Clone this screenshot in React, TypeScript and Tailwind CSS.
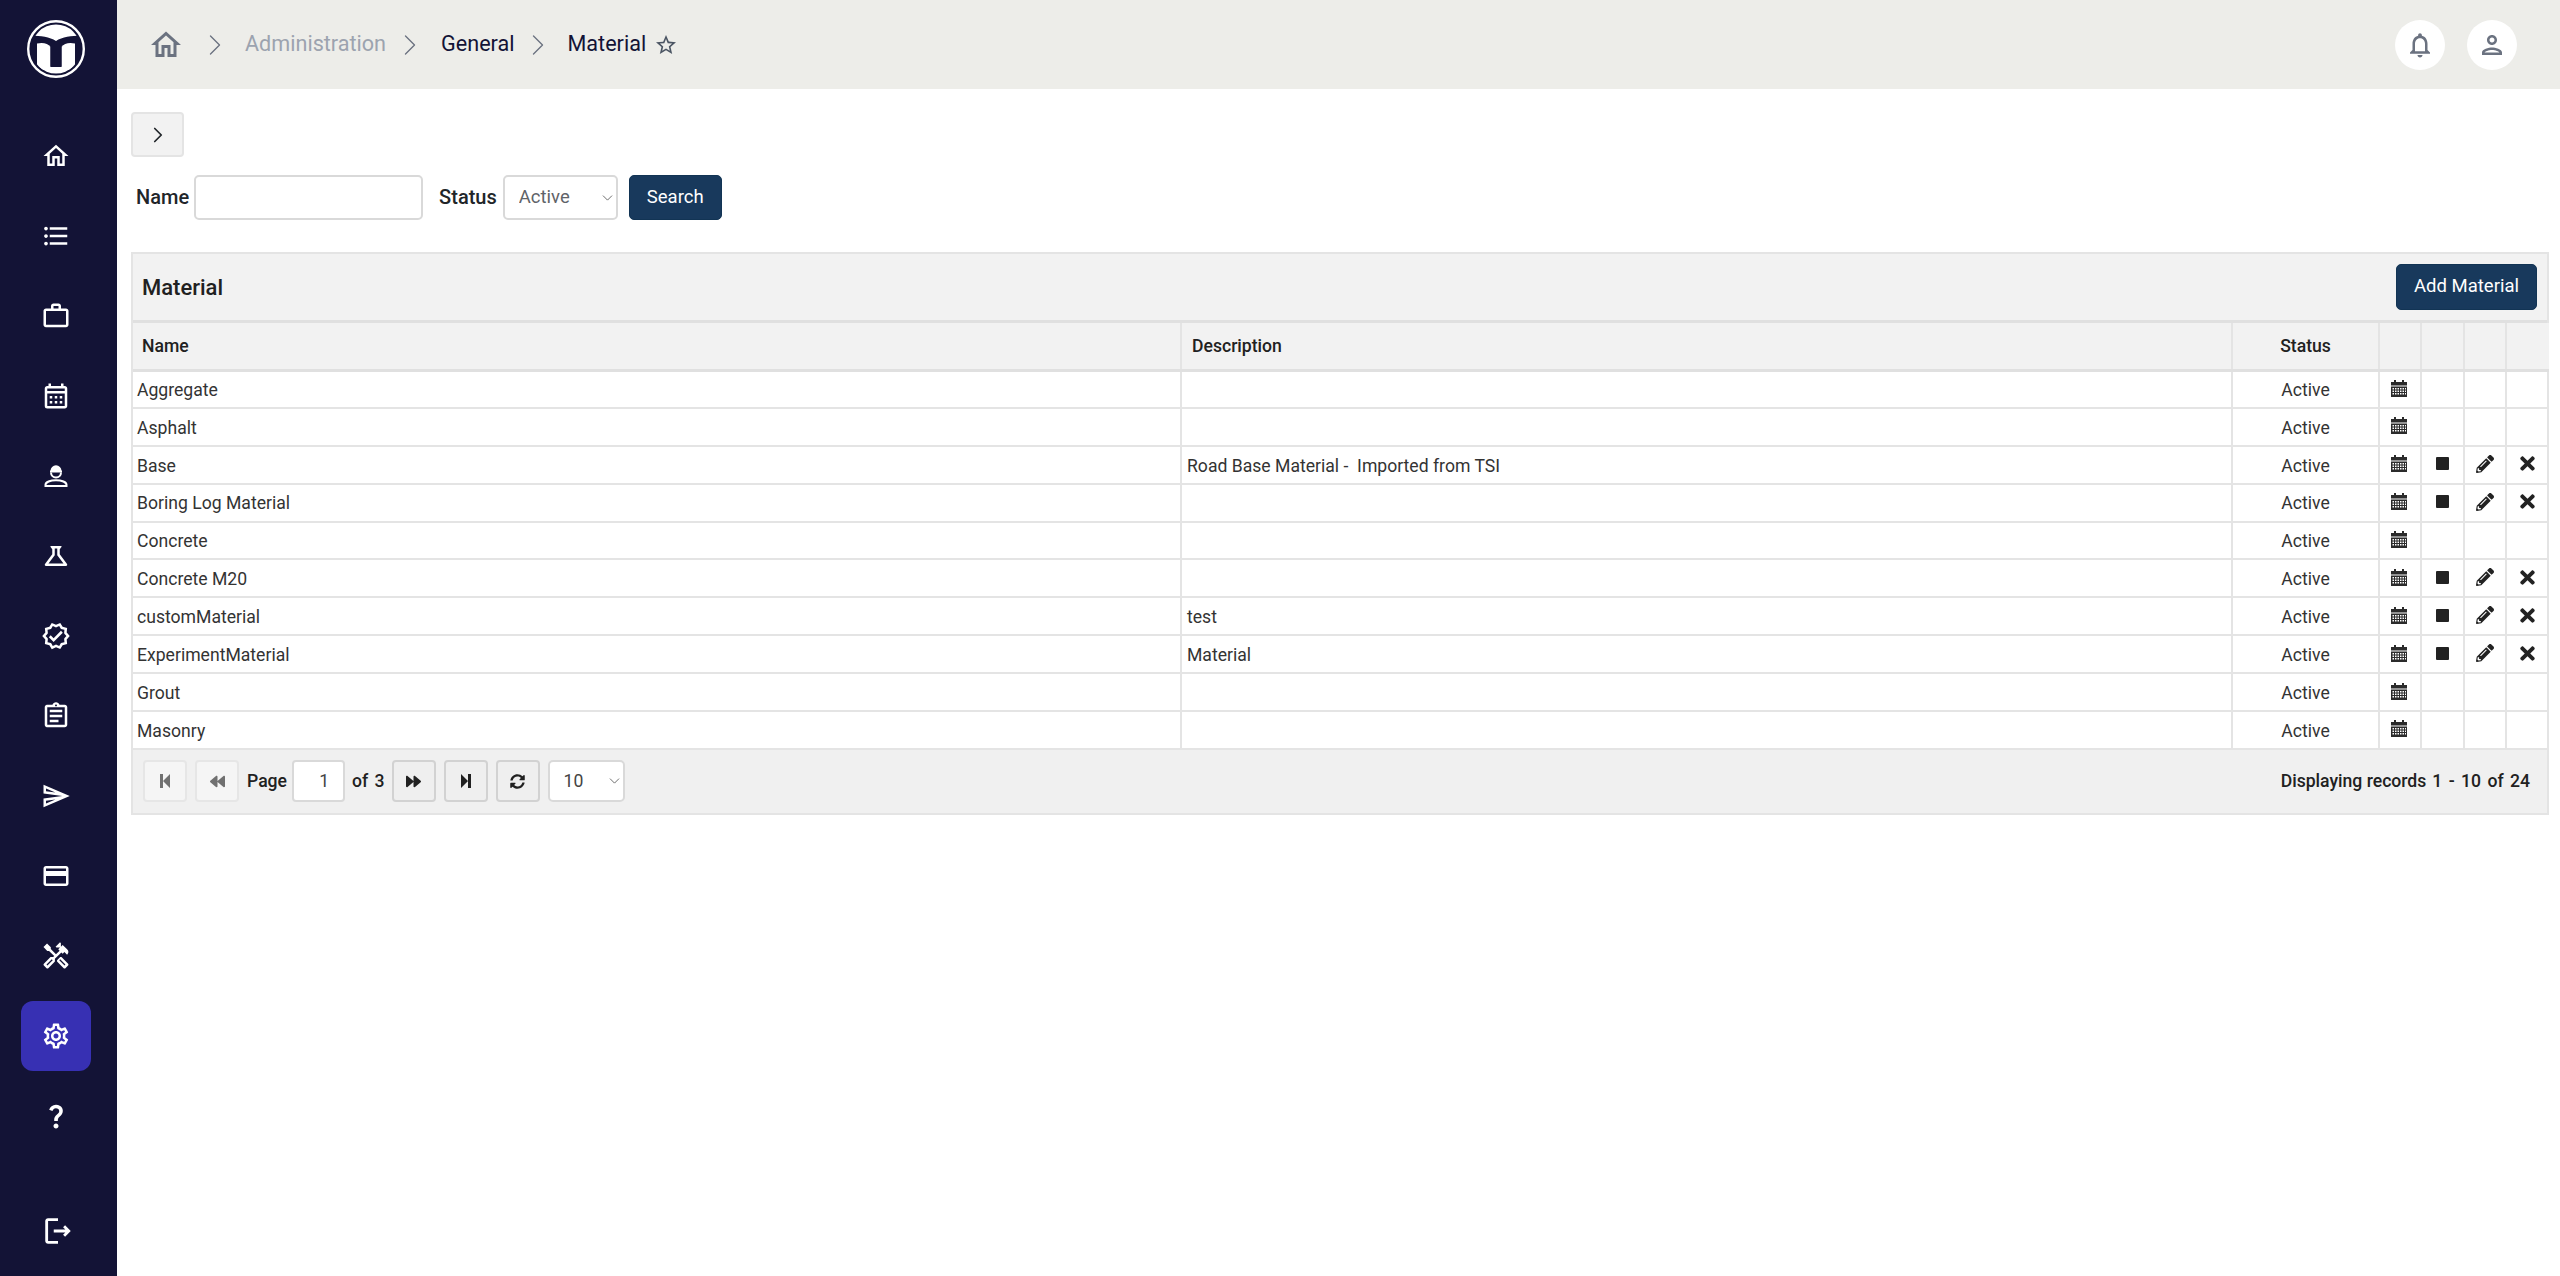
import {
  MdOutlineHome,
  MdFormatListBulleted,
  MdOutlineWorkOutline,
  MdOutlineCalendarMonth,
  MdOutlineScience,
  MdOutlineVerified,
  MdOutlineAssignment,
  MdOutlineSend,
  MdOutlineCreditCard,
  MdOutlineHandyman,
  MdOutlineSettings,
  MdQuestionMark,
  MdOutlineLogout,
  MdOutlineNotifications,
  MdOutlinePerson,
  MdStarBorder,
} from 'react-icons/md'
import { FaBackward, FaForward, FaSyncAlt, FaPencilAlt, FaTimes } from 'react-icons/fa'
import { ChevronDown, ChevronRight } from 'lucide-react'

function WorkerIcon({ size }: { size: number }) {
  return (
    <svg width={size} height={size} viewBox="0 0 30 30" fill="none" stroke="white" strokeWidth="2">
      <path d="M4.5 25h21v-1.2c0-2.6-4.7-4.6-10.500-4.600s-10.500 2-10.500 4.600z" />
      <path d="M10 11.500a5 5 0 0 0 10 0" />
      <path d="M9 10.500h12M10.500 10c0-2.700 2-4.700 4.500-4.700s4.500 2 4.500 4.700" fill="white" />
    </svg>
  )
}

const navItems: { icon: React.ComponentType<{ size: number }>; active?: boolean }[] = [
  { icon: MdOutlineHome },
  { icon: MdFormatListBulleted },
  { icon: MdOutlineWorkOutline },
  { icon: MdOutlineCalendarMonth },
  { icon: WorkerIcon },
  { icon: MdOutlineScience },
  { icon: MdOutlineVerified },
  { icon: MdOutlineAssignment },
  { icon: MdOutlineSend },
  { icon: MdOutlineCreditCard },
  { icon: MdOutlineHandyman },
  { icon: MdOutlineSettings, active: true },
  { icon: MdQuestionMark },
]

const rows = [
  { name: 'Aggregate', desc: '', editable: false },
  { name: 'Asphalt', desc: '', editable: false },
  { name: 'Base', desc: 'Road Base Material -  Imported from TSI', editable: true },
  { name: 'Boring Log Material', desc: '', editable: true },
  { name: 'Concrete', desc: '', editable: false },
  { name: 'Concrete M20', desc: '', editable: true },
  { name: 'customMaterial', desc: 'test', editable: true },
  { name: 'ExperimentMaterial', desc: 'Material', editable: true },
  { name: 'Grout', desc: '', editable: false },
  { name: 'Masonry', desc: '', editable: false },
]

function Logo() {
  return (
    <svg width="58" height="58" viewBox="0 0 58 58">
      <defs>
        <clipPath id="logo-disc">
          <circle cx="29" cy="29" r="24.500" />
        </clipPath>
      </defs>
      <circle cx="29" cy="29" r="27.800" fill="none" stroke="white" strokeWidth="2.400" />
      <g clipPath="url(#logo-disc)" fill="white">
        <path d="M0 0H58V15.500C47 15.500 36 16.500 29 21C22 16.500 11 15.500 0 15.500Z" />
        <path d="M10 23.500C16 22 21 23.500 23.500 27V50H10Z" />
        <path d="M48 23.500C42 22 37 23.500 34.500 27V50H48Z" />
        <path d="M10 47H48V58H10Z" />
      </g>
      <path d="M23.500 46H34.500V50.500H23.500Z" fill="white" />
      <path d="M23.500 27H34.500V47H23.500Z" fill="#131336" />
    </svg>
  )
}

function CalendarGlyph() {
  return (
    <svg width="16" height="17" viewBox="0 0 16 17" fill="#2b2b2b">
      <rect x="3" y="0" width="2" height="3" />
      <rect x="11" y="0" width="2" height="3" />
      <rect x="0" y="2" width="16" height="3.500" />
      <path
        fillRule="evenodd"
        d="M0 6.500h16V17H0z M1.500 8v1.500H3V8z M4 8v1.500h1.500V8z M6.500 8v1.500H8V8z M9 8v1.500h1.500V8z M11.500 8v1.500H13V8z M14 8v1.500h1V8z M1.500 10.500V12H3v-1.500z M4 10.500V12h1.500v-1.500z M6.500 10.500V12H8v-1.500z M9 10.500V12h1.500v-1.500z M11.500 10.500V12H13v-1.500z M14 10.500V12h1v-1.500z M1.500 13v1.500H3V13z M4 13v1.500h1.500V13z M6.500 13v1.500H8V13z M9 13v1.500h1.500V13z M11.500 13v1.500H13V13z M14 13v1.500h1V13z"
      />
    </svg>
  )
}

function StepIcon({ dir }: { dir: 'first' | 'last' }) {
  return (
    <svg width="10" height="14" viewBox="0 0 10 14" fill="currentColor">
      {dir === 'first' ? <path d="M0 0h3v14H0zM3 7l7-7v14z" /> : <path d="M10 0H7v14h3zM7 7L0 0v14z" />}
    </svg>
  )
}

function PagerButton({ children, disabled }: { children: React.ReactNode; disabled?: boolean }) {
  return (
    <button
      className={`flex h-[42px] w-[44px] items-center justify-center rounded-[4px] border-2 ${
        disabled ? 'border-[#e6e6e6] bg-[#f5f5f5] text-[#707070]' : 'border-[#d2d2d2] bg-[#efefef] text-[#212121]'
      }`}
    >
      {children}
    </button>
  )
}

function Select({ value, options, className, textClass }: { value: string; options: string[]; className: string; textClass: string }) {
  return (
    <div className={`relative ${className}`}>
      <select
        defaultValue={value}
        className={`h-full w-full appearance-none rounded-[5px] border-2 border-[#d9d9d9] bg-white pl-[14px] ${textClass}`}
      >
        {options.map((o) => (
          <option key={o}>{o}</option>
        ))}
      </select>
      <ChevronDown size={17} strokeWidth={1.2} className="pointer-events-none absolute top-1/2 right-[2px] -translate-y-1/2 text-[#555]" />
    </div>
  )
}

export default function App() {
  return (
    <div className="flex h-[1276px] w-full bg-white font-['Roboto',sans-serif] text-[#212529]">
      <aside className="flex w-[117px] shrink-0 flex-col items-center bg-[#131336] pt-[20px] pr-[5px] pb-[10px]">
        <Logo />
        <nav className="mt-[43px] flex flex-col items-center gap-[10px]">
          {navItems.map((item, i) => {
            const Icon = item.icon
            return (
              <div
                key={i}
                className={`flex h-[70px] w-[70px] items-center justify-center rounded-[12px] text-white ${
                  item.active ? 'bg-[#3730b3]' : ''
                }`}
              >
                <Icon size={30} />
              </div>
            )
          })}
        </nav>
        <div className="mt-auto ml-[4px] flex h-[70px] w-[70px] items-center justify-center text-white">
          <MdOutlineLogout size={34} />
        </div>
      </aside>

      <main className="flex min-w-0 flex-1 flex-col">
        <header className="flex h-[89px] items-center bg-[#edede9] pr-[43px] pl-[31px]">
          <MdOutlineHome size={36} className="text-[#6b7280]" />
          <ChevronRight size={36} strokeWidth={0.9} className="ml-[13px] text-[#6b7280]" />
          <span className="ml-[12px] text-[21.600px] text-[#9ca3af]">Administration</span>
          <ChevronRight size={36} strokeWidth={0.9} className="ml-[6px] text-[#6b7280]" />
          <span className="ml-[13px] text-[21.600px] text-[#131336]">General</span>
          <ChevronRight size={36} strokeWidth={0.9} className="ml-[6px] text-[#6b7280]" />
          <span className="ml-[11px] text-[21.600px] text-[#131336]">Material</span>
          <MdStarBorder size={24} className="ml-[8px] text-[#4b5563]" />
          <div className="ml-auto flex items-center gap-[22px]">
            <div className="flex h-[50px] w-[50px] items-center justify-center rounded-full bg-white text-[#6b7280]">
              <MdOutlineNotifications size={30} />
            </div>
            <div className="flex h-[50px] w-[50px] items-center justify-center rounded-full bg-white text-[#6b7280]">
              <MdOutlinePerson size={30} />
            </div>
          </div>
        </header>

        <div className="flex flex-col pt-[23px] pr-[11px] pl-[14px]">
          <button className="flex h-[45px] w-[53px] items-center justify-center rounded-[4px] border-2 border-[#e4e4e4] bg-[#f2f2f2]">
            <ChevronRight size={26} strokeWidth={1.6} className="text-[#212529]" />
          </button>

          <div className="mt-[18px] flex h-[45px] items-center pl-[5px]">
            <label className="mb-[2px] text-[20px] font-medium text-[#212529]">Name</label>
            <input className="ml-[5px] h-[45px] w-[229px] rounded-[5px] border-2 border-[#d9d9d9] bg-white" />
            <label className="mb-[2px] ml-[16px] text-[20px] font-medium text-[#212529]">Status</label>
            <Select
              value="Active"
              options={['Active', 'Inactive']}
              className="ml-[6px] h-[45px] w-[115px]"
              textClass="text-[18.500px] text-[#5f6368]"
            />
            <button className="ml-[11px] h-[45px] w-[93px] rounded-[5px] border border-[#123454] bg-[#18395c] text-[18.500px] text-white">
              Search
            </button>
          </div>

          <section className="mt-[32px] border-2 border-[#e4e4e4]">
            <div className="flex h-[69px] items-center justify-between border-b-[3px] border-[#e0e0e0] bg-[#f2f2f2] pr-[10px] pl-[9px]">
              <h2 className="text-[22px] font-medium text-[#212121]">Material</h2>
              <button className="h-[46px] w-[141px] rounded-[5px] border border-[#123454] bg-[#18395c] text-[18.500px] text-white">
                Add Material
              </button>
            </div>

            <table className="w-full table-fixed border-collapse text-[17.600px] text-[#333]">
              <colgroup>
                <col className="w-[1048px]" />
                <col className="w-[1051px]" />
                <col className="w-[147px]" />
                <col className="w-[42px]" />
                <col className="w-[43px]" />
                <col className="w-[42px]" />
                <col className="w-[43px]" />
              </colgroup>
              <thead>
                <tr className="h-[47px] border-b-[3px] border-[#e0e0e0] bg-[#f2f2f2] text-[#212121]">
                  <th className="border-r-2 border-[#e4e4e4] pl-[9px] text-left font-medium">Name</th>
                  <th className="border-r-2 border-[#e4e4e4] pl-[10px] text-left font-medium">Description</th>
                  <th className="border-r-2 border-[#e4e4e4] text-center font-medium">Status</th>
                  <th className="border-r-2 border-[#e4e4e4]" />
                  <th className="border-r-2 border-[#e4e4e4]" />
                  <th className="border-r-2 border-[#e4e4e4]" />
                  <th />
                </tr>
              </thead>
              <tbody>
                {rows.map((row) => (
                  <tr key={row.name} className="h-[37.900px] border-b-2 border-[#e4e4e4]">
                    <td className="border-r-2 border-[#e4e4e4] pt-[2px] pl-[4px]">{row.name}</td>
                    <td className="border-r-2 border-[#e4e4e4] pt-[2px] pl-[5px] whitespace-pre">{row.desc}</td>
                    <td className="border-r-2 border-[#e4e4e4] pt-[2px] text-center">Active</td>
                    <td className="border-r-2 border-[#e4e4e4]">
                      <div className="flex justify-center pr-[2px] pb-[2px]">
                        <CalendarGlyph />
                      </div>
                    </td>
                    <td className="border-r-2 border-[#e4e4e4]">
                      {row.editable && (
                        <div className="flex justify-center pb-[2px]">
                          <div className="h-[13px] w-[13px] rounded-[1px] bg-[#222]" />
                        </div>
                      )}
                    </td>
                    <td className="border-r-2 border-[#e4e4e4]">
                      {row.editable && (
                        <div className="flex justify-center pr-[1px] pb-[2px] text-[#222]">
                          <FaPencilAlt size={18} />
                        </div>
                      )}
                    </td>
                    <td>
                      {row.editable && (
                        <div className="flex justify-center pr-[1px] pb-[2px] text-[#222]">
                          <FaTimes size={21} />
                        </div>
                      )}
                    </td>
                  </tr>
                ))}
              </tbody>
            </table>

            <div className="flex h-[63px] items-center bg-[#f0f0f0] pr-[17px] pl-[10px] text-[17.600px] font-medium text-[#212121]">
              <PagerButton disabled>
                <StepIcon dir="first" />
              </PagerButton>
              <div className="ml-[8px]">
                <PagerButton disabled>
                  <FaBackward size={15} />
                </PagerButton>
              </div>
              <span className="ml-[8px]">Page</span>
              <input
                defaultValue="1"
                className="ml-[5px] h-[42px] w-[53px] rounded-[4px] border-2 border-[#d9d9d9] bg-white pr-[14px] text-right font-normal text-[#444]"
              />
              <span className="ml-[7px] [word-spacing:2px]">of 3</span>
              <div className="ml-[7px]">
                <PagerButton>
                  <FaForward size={15} />
                </PagerButton>
              </div>
              <div className="ml-[8px]">
                <PagerButton>
                  <StepIcon dir="last" />
                </PagerButton>
              </div>
              <div className="ml-[8px]">
                <PagerButton>
                  <FaSyncAlt size={15} />
                </PagerButton>
              </div>
              <Select
                value="10"
                options={['10', '25', '50']}
                className="ml-[8px] h-[42px] w-[77px]"
                textClass="font-normal text-[#444]"
              />
              <span className="ml-auto">Displaying records</span>
              <span className="ml-[6px] [word-spacing:2px]">1 - 10 of 24</span>
            </div>
          </section>
        </div>
      </main>
    </div>
  )
}
